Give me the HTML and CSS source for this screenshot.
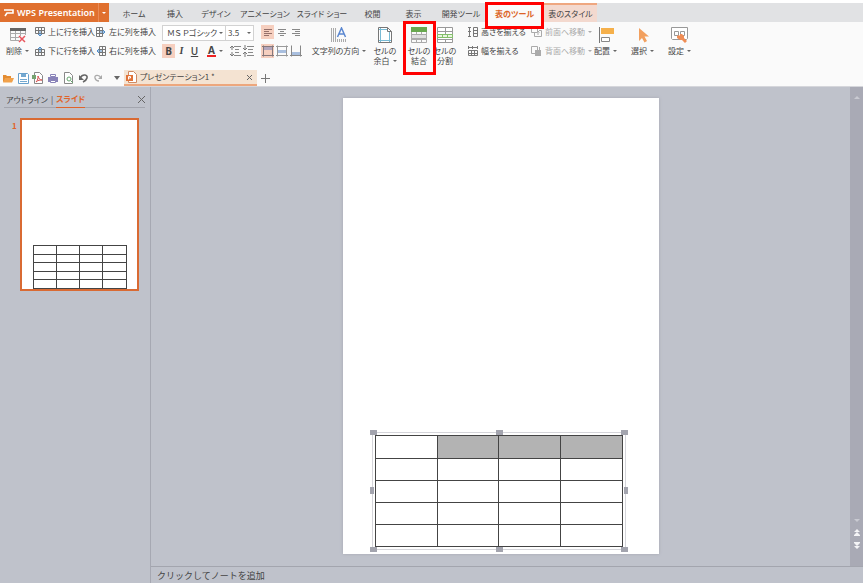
FILE: index.html
```html
<!DOCTYPE html>
<html lang="ja">
<head>
<meta charset="utf-8">
<title>WPS Presentation</title>
<link rel="stylesheet" href="styles.css">
</head>
<body>
<div class="app">
  <nav class="tabs">
    <button class="brand"><svg width="12" height="10" viewBox="0 0 12 10"><path d="M1 2h9v3H4L2 8" fill="none" stroke="#fff" stroke-width="1.6"/></svg>WPS Presentation</button>
    <button class="brand-menu caret" aria-label="メニュー"></button>
    <a class="tab" href="#">ホーム</a>
    <a class="tab" href="#">挿入</a>
    <a class="tab" href="#">デザイン</a>
    <a class="tab" href="#">アニメーション</a>
    <a class="tab" href="#">スライド ショー</a>
    <a class="tab" href="#">校閲</a>
    <a class="tab" href="#">表示</a>
    <a class="tab" href="#">開発ツール</a>
    <a class="tab current" href="#">表のツール<span class="callout callout-tab"></span></a>
    <a class="tab context" href="#">表のスタイル</a>
  </nav>

  <div class="ribbon">
    <button class="big delete">
      <svg width="16" height="16" viewBox="0 0 16 16"><path d="M.5 2v11.500H9M1 6.500h14M5.500 2v11M10.500 2v7M1 10.500h8M15.500 2v6" fill="none" stroke="#aaa"/><path d="M0 1h16v3H0z" fill="#666"/><path d="m9 9 6 6m0-6-6 6" stroke="#e8555d" stroke-width="1.5"/></svg>
      <span class="caret">削除</span>
    </button>
    <div class="pair">
      <button class="small"><svg width="10" height="10" viewBox="0 0 10 10"><path d="M.5.5h9v6h-9zM.5 3.500h9M3.500.5v6M6.500.5v6" fill="none" stroke="#777"/><path d="M5 4v5M3 7l2 2 2-2" fill="none" stroke="#4e8cc8"/></svg>上に行を挿入</button>
      <button class="small"><svg width="10" height="10" viewBox="0 0 10 10"><path d="M.5 3.500h9v6h-9zM.5 6.500h9M3.500 3.500v6M6.500 3.500v6" fill="none" stroke="#777"/><path d="M5 6V1M3 3l2-2 2 2" fill="none" stroke="#4e8cc8"/></svg>下に行を挿入</button>
    </div>
    <div class="pair">
      <button class="small"><svg width="10" height="10" viewBox="0 0 10 10"><path d="M.5.5h6v9h-6zM3.500.5v9M.5 3.500h6M.5 6.500h6" fill="none" stroke="#777"/><path d="M4 5h5M7 3l2 2-2 2" fill="none" stroke="#4e8cc8"/></svg>左に列を挿入</button>
      <button class="small"><svg width="10" height="10" viewBox="0 0 10 10"><path d="M3.500.5h6v9h-6zM6.500.5v9M3.500 3.500h6M3.500 6.500h6" fill="none" stroke="#777"/><path d="M6 5H1M3 3 1 5l2 2" fill="none" stroke="#4e8cc8"/></svg>右に列を挿入</button>
    </div>
    <div class="font-group">
      <div class="fields">
        <label class="field family caret"><select aria-label="フォント"><option>ＭＳ Ｐゴシック</option></select></label>
        <label class="field caret"><select aria-label="フォント サイズ"><option>3.5</option></select></label>
      </div>
      <div class="marks">
        <button class="tool on"><b>B</b></button>
        <button class="tool"><i>I</i></button>
        <button class="tool"><u>U</u></button>
        <button class="tool color caret"><b>A</b></button>
        <button class="tool" aria-label="行間を広げる"><svg width="11" height="12" viewBox="0 0 11 12"><path d="M4 1.500h7M5 4.500h4M5 7.500h4M4 10.500h7" stroke="#888"/><path d="M2 1v4M2 7v4M0 3l2-2 2 2M0 9l2 2 2-2" fill="none" stroke="#777"/></svg></button>
        <button class="tool" aria-label="行間を狭める"><svg width="11" height="12" viewBox="0 0 11 12"><path d="M4 1.500h7M5 4.500h5M5 7.500h5M4 10.500h7" stroke="#888"/><path d="M2 0v4M2 8v4M0 3l2 2 2-2M0 9l2-2 2 2" fill="none" stroke="#777"/></svg></button>
      </div>
    </div>
    <div class="aligns">
      <button class="tool on" aria-label="左揃え"><svg width="10" height="9" viewBox="0 0 10 9"><path d="M1 1.500h8M1 3.500h5M1 5.500h8M1 7.500h5" stroke="#95706a"/></svg></button>
      <button class="tool" aria-label="中央揃え"><svg width="10" height="9" viewBox="0 0 10 9"><path d="M1 1.500h8M3 3.500h4M1 5.500h8M3 7.500h4" stroke="#888"/></svg></button>
      <button class="tool" aria-label="右揃え"><svg width="10" height="9" viewBox="0 0 10 9"><path d="M1 1.500h8M4 3.500h5M1 5.500h8M4 7.500h5" stroke="#888"/></svg></button>
      <button class="tool on" aria-label="上揃え"><svg width="12" height="12" viewBox="0 0 12 12"><path d="M2 2h8v3H2z" fill="#b3a6bd"/><path d="M1.500.5v11M10.500.5v11M0 1.500h12M0 10.500h12" stroke="#86787b"/></svg></button>
      <button class="tool" aria-label="上下中央揃え"><svg width="12" height="12" viewBox="0 0 12 12"><path d="M2 5h8v3H2z" fill="#a9bfdf"/><path d="M1.500.5v11M10.500.5v11M0 1.500h12M0 10.500h12" stroke="#999"/></svg></button>
      <button class="tool" aria-label="下揃え"><svg width="12" height="12" viewBox="0 0 12 12"><path d="M2 7h8v3H2z" fill="#a9bfdf"/><path d="M1.500.5v11M10.500.5v11M0 10.500h12" stroke="#888"/></svg></button>
    </div>
    <button class="big direction">
      <svg width="16" height="16" viewBox="0 0 16 16"><path d="M.5 1v14M2.500 1v14M4.500 1v14M6.500 12v3M8.500 12v3M10.500 12v3M12.500 12v3M14.500 12v3" stroke="#aaa"/><path d="m6.500 10 4-9 4 9M8 7h5" fill="none" stroke="#5b87d0" stroke-width="1.500"/></svg>
      <span class="caret">文字列の方向</span>
    </button>
    <button class="big margins">
      <svg width="14" height="16" viewBox="0 0 14 16"><path d="M.5.5h9l4 4v11H.5z" fill="#fff" stroke="#777"/><path d="M9.500.5v4h4" fill="none" stroke="#777"/><path d="M2.500 1v14M11.500 5v10M1 2.500h8M1 13.500h12" stroke="#78bad4"/></svg>
      <span>セルの</span><span class="caret">余白</span>
    </button>
    <button class="big merge">
      <svg width="16" height="16" viewBox="0 0 16 16"><path d="M.5 2v13.500h15V2M.5 12.500h15M5.500 5v3M10.500 5v3M5.500 12v3M10.500 12v3" fill="none" stroke="#aaa"/><path d="M0 0h16v5H0z" fill="#68a84f"/><path d="M.5 7.500h15v4H.5z" fill="#dedede" stroke="#aaa"/></svg>
      <span>セルの</span><span>結合</span><span class="callout callout-merge"></span>
    </button>
    <button class="big split">
      <svg width="16" height="16" viewBox="0 0 16 16"><path d="M.5.5h15v15H.5zM.5 4.500h15M.5 12.500h15M8.500.5V7M8.500 12v3" fill="#fff" stroke="#999"/><path d="M.5 7.500h15v3H.5zM5.500 7.500v3M10.500 7.500v3" fill="#e8f5df" stroke="#83bf69"/></svg>
      <span>セルの</span><span>分割</span>
    </button>
    <div class="pair">
      <button class="small"><svg width="10" height="10" viewBox="0 0 10 10"><path d="M1.500 0v10M0 .5h3M0 4.500h3M0 9.500h3M5.500.5h4v9h-4zM5.500 3.500h4M5.500 6.500h4" fill="none" stroke="#777"/></svg>高さを揃える</button>
      <button class="small"><svg width="10" height="10" viewBox="0 0 10 10"><path d="M0 1.500h10M.5 0v3M4.500 0v3M9.500 0v3M.5 4.500h9v5h-9zM.5 7.500h9M3.500 4.500v5M6.500 4.500v5" fill="none" stroke="#777"/></svg>幅を揃える</button>
    </div>
    <div class="pair order">
      <button class="small caret" disabled><svg width="11" height="10" viewBox="0 0 11 10"><path d="M.5.5h6v5h-6zM3.500 6v3.500h7V3.500H8" fill="none" stroke="#aaa"/><path d="M7 8V4M5.500 5.500 7 4l1.500 1.500" fill="none" stroke="#aaa"/></svg>前面へ移動</button>
      <button class="small caret" disabled><svg width="11" height="10" viewBox="0 0 11 10"><path d="M.5.5h6v7h-6z" fill="none" stroke="#aaa"/><path d="M4 4h6v6H4z" fill="#aaa"/><path d="M8.500 1v3" stroke="#aaa"/></svg>背面へ移動</button>
    </div>
    <button class="big">
      <svg width="16" height="16" viewBox="0 0 16 16"><path d="M1.500 0v16" stroke="#777"/><path d="M3 1h13v6H3z" fill="#f5b04b"/><path d="M3.500 10.500h8v4h-8z" fill="#fff" stroke="#888"/></svg>
      <span class="caret">配置</span>
    </button>
    <button class="big">
      <svg width="12" height="16" viewBox="0 0 12 16"><path d="M2 1v13l3-3 2.500 4.500L10 14l-2.500-4.500H12z" fill="#f2a05f"/></svg>
      <span class="caret">選択</span>
    </button>
    <button class="big">
      <svg width="17" height="16" viewBox="0 0 17 16"><path d="M.5.5h16v11l-1 1H1.500l-1-1zM3.500 4.500h4v4h-4zM9.500 4.500h4v4h-4z" fill="#fff" stroke="#999"/><path d="m6 9 2-1 1 1V7h2l2 2v2l3 3-2 2-3-3H9l-3-2z" fill="#ef8d55"/></svg>
      <span class="caret">設定</span>
    </button>
  </div>

  <div class="docbar">
    <div class="quick">
      <button aria-label="開く"><svg width="12" height="11" viewBox="0 0 12 11"><path d="M1 9V2h3l1 1h4v2" fill="#e38c32"/><path d="M1 9.500 3 5h9l-2 4.500z" fill="#f1a14b"/></svg></button>
      <button aria-label="保存"><svg width="11" height="11" viewBox="0 0 11 11"><path d="M.5.5h9l1 1v9H.5z" fill="#fff" stroke="#68a0cc"/><path d="M3 1h5v3H3zM2 6h7v1H2zM2 8h7v1H2z" fill="#74a8d0"/></svg></button>
      <button aria-label="PDF"><svg width="12" height="12" viewBox="0 0 12 12"><path d="M2.500.5h5l3 3v8h-8z" fill="#fff" stroke="#888"/><path d="M4 10c2-2 2-4 2-6 1 3 2 4 4 4-2 0-4 0-6 2" fill="none" stroke="#d65252"/><path d="M0 3h4v4H0z" fill="#76a370"/></svg></button>
      <button aria-label="印刷"><svg width="12" height="11" viewBox="0 0 12 11"><path d="M1 4h10v5H1z" fill="#8882b8"/><path d="M3.500 1.500h5v2h-5zM3.500 7.500h5v2h-5z" fill="#fff" stroke="#8882b8"/></svg></button>
      <button aria-label="プレビュー"><svg width="11" height="12" viewBox="0 0 11 12"><path d="M1.500.5h5l3 3v8h-8z" fill="#fff" stroke="#888"/><circle cx="6" cy="7" r="2" fill="none" stroke="#65a56d"/><path d="m8 9 2 2" stroke="#65a56d"/></svg></button>
      <button aria-label="元に戻す"><svg width="11" height="10" viewBox="0 0 11 10"><path d="M2 5c3-5 8-3 7 0-.5 2-2 3-4 4" fill="none" stroke="#666" stroke-width="1.600"/><path d="M1 2v5h5z" fill="#666"/></svg></button>
      <button aria-label="やり直し"><svg width="11" height="10" viewBox="0 0 11 10"><path d="M8 5C6 1 1 2 2 5c.5 2 2 3 4 3" fill="none" stroke="#aaa" stroke-width="1.300"/><path d="M9 2v4H5z" fill="#aaa"/></svg></button>
      <button class="more caret" aria-label="その他"></button>
    </div>
    <div class="doc">
      <svg width="11" height="12" viewBox="0 0 11 12"><path d="M2.500.5h5l3 3v8h-8z" fill="#fff" stroke="#d08a62"/><path d="M0 4h7v6H0z" fill="#e07339"/><path d="M2.500 8.500v-3h2v1.500h-2" fill="none" stroke="#fff"/></svg>
      <span>プレゼンテーション1 *</span>
      <button aria-label="閉じる"><svg width="7" height="7" viewBox="0 0 7 7"><path d="m1 1 5 5m0-5L1 6" stroke="#666"/></svg></button>
    </div>
    <button class="new" aria-label="新規"><svg width="9" height="9" viewBox="0 0 9 9"><path d="M4.500 0v9M0 4.500h9" stroke="#777"/></svg></button>
  </div>

  <main class="work">
    <aside class="side">
      <div class="side-head">
        <button>アウトライン</button><span class="bar">|</span><button class="active">スライド</button>
        <button class="close" aria-label="閉じる"><svg width="7" height="7" viewBox="0 0 7 7"><path d="m0 0 7 7m0-7L0 7" stroke="#666"/></svg></button>
      </div>
      <div class="thumb-row">
        <span class="num">1</span>
        <div class="thumb">
          <table class="grid"><tr><td><td><td><td><tr><td><td><td><td><tr><td><td><td><td><tr><td><td><td><td><tr><td><td><td><td></table>
        </div>
      </div>
    </aside>
    <section class="editor">
      <div class="stage">
        <div class="slide">
          <div class="frame">
            <table class="grid"><tr><td><td class="sel"><td class="sel"><td class="sel"><tr><td><td><td><td><tr><td><td><td><td><tr><td><td><td><td><tr><td><td><td><td></table>
            <i class="h top left"></i><i class="h top mid"></i><i class="h top right"></i>
            <i class="h center left"></i><i class="h center right"></i>
            <i class="h bottom left"></i><i class="h bottom mid"></i><i class="h bottom right"></i>
          </div>
        </div>
      </div>
      <div class="scroll">
        <svg width="8" height="5" viewBox="0 0 8 5"><path d="m1 4 3-3 3 3z" fill="#c9cad2"/></svg>
        <div class="scroll-end">
          <svg width="8" height="5" viewBox="0 0 8 5"><path d="m1 1 3 3 3-3z" fill="#c9cad2"/></svg>
          <svg width="6" height="7" viewBox="0 0 6 7"><path d="m0 3 3-3 3 3zM0 6l3-3 3 3zM0 6h6v1H0z" fill="#f4f4f6"/></svg>
          <svg width="6" height="7" viewBox="0 0 6 7"><path d="m0 4 3 3 3-3zM0 1l3 3 3-3zM0 0h6v1H0z" fill="#f4f4f6"/></svg>
        </div>
      </div>
      <div class="notes">クリックしてノートを追加</div>
    </section>
  </main>
</div>
</body>
</html>
```

FILE: styles.css
```css
* { box-sizing: border-box; }
body {
  margin: 0;
  background: #fff;
  color: #444;
  font-family: "Noto Sans CJK JP", sans-serif;
  font-size: 8px;
  line-height: 10px;
  font-feature-settings: "palt";
}
button, select {
  appearance: none;
  margin: 0;
  padding: 0;
  border: 0;
  background: none;
  color: inherit;
  font: inherit;
  font-feature-settings: inherit;
  white-space: nowrap;
}
a { color: inherit; text-decoration: none; }
svg { display: block; flex: none; }

.app {
  display: grid;
  grid-template-rows: 19px 48px 17px minmax(0, 1fr);
  height: 100vh;
  padding: 3px 2px 0 0;
}
.caret::after {
  content: "";
  display: inline-block;
  flex: none;
  margin-left: 3px;
  vertical-align: 2px;
  border: 2px solid transparent;
  border-top-color: #666;
  border-bottom: 0;
}

/* Tab strip */
.tabs {
  display: grid;
  grid-template-columns: 98px 11px 50px 32px 50px 48px 66px 35px 47px 48px 59px 53px;
  background: #e1e2e4;
}
.brand {
  display: flex;
  align-items: center;
  gap: 2px;
  padding-left: 3px;
  background: #e0702f;
  color: #fff;
  font-family: "Noto Sans", sans-serif;
  font-size: 9px;
  font-weight: 600;
}
.brand-menu { background: #e0702f; border-left: 1px solid #e98b56; }
.brand-menu::after { margin: 0; border-top-color: #fff; }
.tab {
  display: flex;
  align-items: center;
  justify-content: center;
  padding-top: 2px;
  white-space: nowrap;
}
.current { position: relative; background: #fafafa; color: #dc6426; font-weight: 700; }
.context { border-top: 2px solid #efa780; background: #f3d9cf; padding-top: 0; }
.callout {
  position: absolute;
  z-index: 2;
  border: 3px solid #f00;
  pointer-events: none;
}
.callout-tab { inset: -1px 0 -7px 0; }

/* Ribbon */
.ribbon { display: flex; padding-left: 3px; background: #fafafa; }
.big {
  position: relative;
  display: flex;
  flex-direction: column;
  align-items: center;
  flex: none;
  width: 37px;
  padding-top: 5px;
}
.big svg { height: 16px; margin-bottom: 3px; }
.delete { width: 29px; margin-right: 3px; }
.direction { width: 60px; }
.margins { width: 32px; }
.merge { width: 36px; }
.split { width: 16px; margin-right: 15px; }
.pair { display: flex; flex-direction: column; gap: 9px; padding-top: 5px; flex: none; width: 61px; }
.split + .pair { width: 63px; }
.order { width: 56px; }
.small { display: flex; align-items: center; gap: 3px; height: 10px; }
.small:disabled { color: #aaa; }
.small:disabled::after { margin-left: 0; border-top-color: #aaa; }
.callout-merge { inset: -1px 1px -5px 2px; }
.font-group { width: 104px; padding: 3px 0 0 5px; flex: none; }
.fields, .marks { display: flex; }
.field {
  display: flex;
  align-items: center;
  justify-content: space-between;
  width: 28px;
  height: 16px;
  padding: 0 2px;
  border: 1px solid #d2d2d2;
  border-left: 0;
  background: #fff;
}
.family { width: 64px; padding-left: 4px; border-left: 1px solid #d2d2d2; }
.field select { min-width: 0; flex: 1; }
.field::after { margin: 0; }
.marks { margin-top: 3px; }
.tool {
  display: grid;
  place-items: center;
  width: 13px;
  height: 14px;
  flex: none;
  font-family: "Open Sans", sans-serif;
  font-size: 10px;
  line-height: 12px;
}
.tool i { font-family: "Liberation Serif", serif; font-weight: 700; }
.tool u { font-weight: 600; }
.on { background: #f6cfbf; }
.color { display: flex; align-items: center; justify-content: center; width: 28px; }
.color b { padding: 0 1px; border-bottom: 2px solid #e22; line-height: 10px; }
.aligns {
  display: grid;
  grid-template-columns: repeat(3, 14px);
  grid-auto-rows: 14px;
  row-gap: 5px;
  align-content: start;
  width: 48px;
  padding-top: 3px;
  flex: none;
}

/* Quick access and document tabs */
.docbar { display: flex; background: #fafafa; border-bottom: 1px solid #d5d6db; }
.quick { display: flex; align-items: center; gap: 3px; width: 124px; padding-left: 2px; }
.quick button { display: grid; place-items: center; width: 12px; }
.quick .more { margin-left: 4px; }
.more::after { margin: 0; border-width: 4px 3px 0; }
.doc {
  display: flex;
  align-items: center;
  gap: 3px;
  width: 133px;
  padding: 0 4px 0 2px;
  border-bottom: 2px solid #eda77d;
  background: #f4e3d2;
  white-space: nowrap;
}
.doc button { margin-left: auto; }
.new { padding-left: 4px; }

/* Work area */
.work { display: grid; grid-template-columns: 151px minmax(0, 1fr); min-height: 0; background: #bfc2cb; }
.side { border-right: 1px solid #a6a8b2; padding: 5px 5px 0 4px; }
.side-head {
  display: flex;
  align-items: center;
  gap: 3px;
  height: 16px;
  padding-left: 2px;
  border-bottom: 1px solid #a3a5ae;
}
.side-head button { height: 16px; }
.side-head .active { color: #e0642a; font-weight: 700; border-bottom: 1px solid #e0642a; }
.side-head .close { margin-left: auto; }
.thumb-row { display: flex; gap: 4px; margin-top: 10px; padding-left: 8px; }
.num { width: 4px; padding-top: 3px; color: #e0642a; font-weight: 700; }
.thumb {
  display: flex;
  align-items: flex-end;
  justify-content: center;
  width: 119px;
  aspect-ratio: 119 / 173;
  border: 2px solid #d96a33;
  background: #fff;
}
.grid { border-collapse: collapse; table-layout: fixed; width: 100%; height: 100%; }
.grid td { padding: 0; border: 1px solid #444; }
.thumb .grid { width: 94px; height: 44px; }
.sel { background: #b3b3b3; }

.editor {
  display: grid;
  grid-template: minmax(0, 1fr) 17px / minmax(0, 1fr) 13px;
  min-height: 0;
}
.stage { display: flex; justify-content: center; min-height: 0; padding: 11px 0 12px; }
.slide {
  display: flex;
  align-items: flex-end;
  justify-content: center;
  height: 100%;
  aspect-ratio: 316 / 456;
  padding: 0 3px 4px 0;
  background: #fff;
  box-shadow: 0 0 3px #a5a7b0;
}
.frame { position: relative; width: 81%; height: 26%; padding: 2px; border: 1px solid #d5d5da; }
.h { position: absolute; width: 7px; height: 5px; background: #a3a4ae; }
.top { top: -3px; }
.bottom { bottom: -3px; }
.left { left: -3px; }
.right { right: -3px; }
.mid { left: calc(50% - 3px); }
.center { top: calc(50% - 4px); width: 4px; height: 7px; }
.scroll {
  display: flex;
  flex-direction: column;
  align-items: center;
  justify-content: space-between;
  padding: 8px 0 17px;
  background: #a9aab5;
}
.scroll-end { display: flex; flex-direction: column; align-items: center; gap: 6px; }
.notes {
  grid-column: 1 / -1;
  padding: 3px 6px;
  border-top: 1px solid #a3a5ae;
  font-size: 9px;
  line-height: 12px;
  font-feature-settings: normal;
}
```
